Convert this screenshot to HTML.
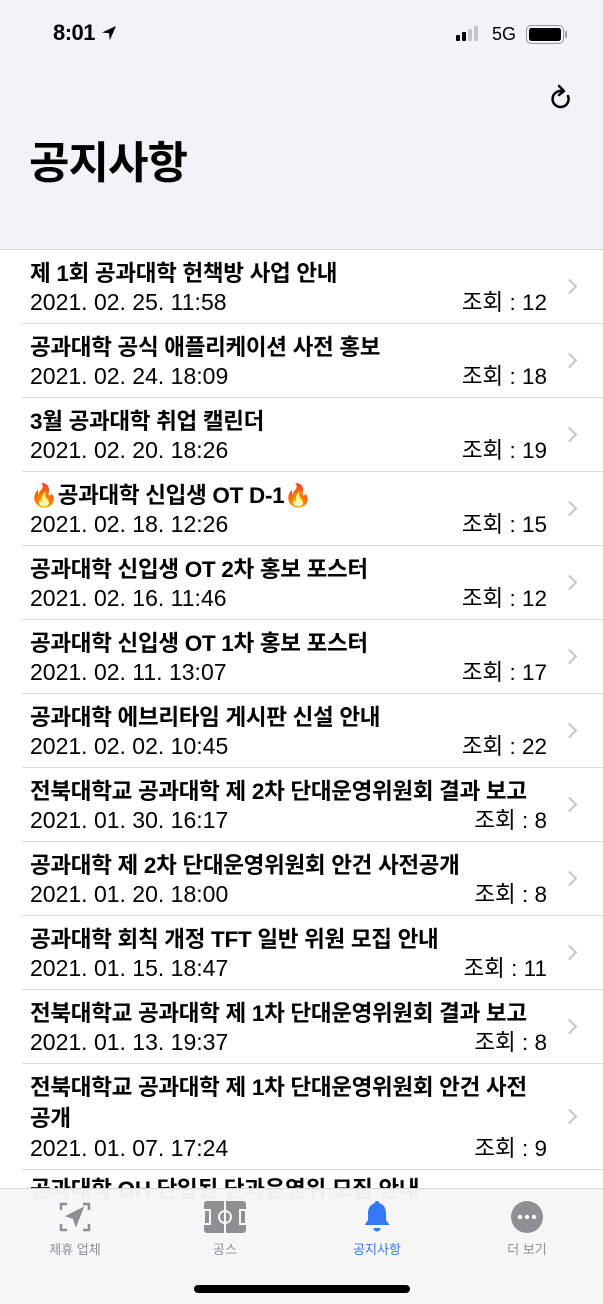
<!DOCTYPE html>
<html><head><meta charset="utf-8"><style>
*{margin:0;padding:0;box-sizing:border-box}
body{width:603px;height:1304px;overflow:hidden;background:#fff;font-family:"Liberation Sans","Noto Sans CJK KR",sans-serif;position:relative;color:#000}
.hdr{position:absolute;left:0;top:0;width:603px;height:250px;background:#f2f2f7;border-bottom:1px solid #d8d8dc}
.time{position:absolute;left:53px;top:20px;font-size:22px;font-weight:bold;letter-spacing:-0.5px}
.h1{position:absolute;left:29px;top:134px;font-size:44px;line-height:60px;font-weight:bold;letter-spacing:-1px}
.row{position:absolute;left:0;width:603px}
.row .sep{position:absolute;left:22px;right:0;bottom:0;height:1px;background:#dcdcdf}
.t{position:absolute;left:30px;top:8px;font-size:22.5px;font-weight:bold;letter-spacing:-0.3px;line-height:31px;width:522px}
.d{position:absolute;left:30px;font-size:23px;line-height:30px}
.v{position:absolute;right:56px;font-size:22.5px;line-height:30px}
.chev{position:absolute;right:28px;width:11px;height:11px;border-right:2.5px solid #c4c4c7;border-top:2.5px solid #c4c4c7;transform:rotate(45deg)}
.tab{position:absolute;left:0;top:1188px;width:603px;height:116px;background:rgba(246,246,247,0.97);border-top:1px solid #d5d5d8}
.tl{position:absolute;top:50px;font-size:13px;color:#8e8e93;transform:translateX(-50%)}
</style></head><body>
<div class="hdr">
<div class="time">8:01 <svg width="16" height="16" viewBox="0 0 16 16" style="vertical-align:-1px"><path d="M15 1L1 7.5l7 .8.8 7z" fill="#000"/></svg></div>
<svg style="position:absolute;left:455px;top:26px" width="30" height="16"><rect x="1" y="9" width="4" height="6" rx="1"/><rect x="7" y="6" width="4" height="9" rx="1"/><rect x="13" y="3" width="4" height="12" rx="1" fill="#c5c5c8"/><rect x="19" y="0" width="4" height="15" rx="1" fill="#c5c5c8"/></svg>
<div style="position:absolute;left:492px;top:24px;font-size:18px">5G</div>
<div style="position:absolute;left:526px;top:25px;width:38px;height:19px;border:1.5px solid #999;border-radius:5px;padding:2px"><div style="width:100%;height:100%;background:#000;border-radius:2.5px"></div></div>
<div style="position:absolute;left:565px;top:31px;width:2px;height:7px;background:#999;border-radius:1px"></div>
<svg style="position:absolute;left:549px;top:84px" width="26" height="28" viewBox="0 0 26 28"><path d="M19 12A8 8 0 1 1 12 7" fill="none" stroke="#000" stroke-width="2.5" stroke-linecap="round"/><path d="M10 2l5 5-5 4" fill="none" stroke="#000" stroke-width="2.5" stroke-linecap="round" stroke-linejoin="round"/></svg>
<div class="h1">공지사항</div>
</div>
<div id="list"></div>
<div class="row" style="top:1170px;height:30px"><div class="t" style="top:4px">공과대학 OH 단일된 단과운영위 모집 안내</div></div>
<div class="tab">
<svg style="position:absolute;left:59px;top:12px" width="32" height="32" viewBox="0 0 32 32" fill="none" stroke="#8e8e93" stroke-width="2.5"><path d="M2 9V3h6M24 3h6v6M30 23v6h-6M8 29H2v-6"/><path d="M23 8L9 15l6 2 2 6z" fill="#8e8e93"/></svg>
<svg style="position:absolute;left:204px;top:12px" width="42" height="32" viewBox="0 0 42 32"><rect width="42" height="32" rx="3" fill="#8e8e93"/><g fill="none" stroke="#f6f6f7" stroke-width="2"><line x1="21" y1="0" x2="21" y2="32"/><circle cx="21" cy="16" r="6"/><rect x="0" y="9" width="6" height="14"/><rect x="36" y="9" width="6" height="14"/></g></svg>
<svg style="position:absolute;left:362px;top:10px" width="30" height="36" viewBox="0 0 30 36"><path d="M15 2c-1.5 0-2.3 1-2.3 2.2C8 5.5 6 9.5 6 14v7l-3.5 5h25L24 21v-7c0-4.5-2-8.5-6.7-9.8C17.3 3 16.5 2 15 2z" fill="#3478f6"/><path d="M11.5 29h7a3.5 3.5 0 0 1-7 0z" fill="#3478f6"/></svg>
<svg style="position:absolute;left:511px;top:12px" width="32" height="32"><circle cx="16" cy="16" r="16" fill="#8e8e93"/><circle cx="9" cy="16" r="2.2" fill="#fff"/><circle cx="16" cy="16" r="2.2" fill="#fff"/><circle cx="23" cy="16" r="2.2" fill="#fff"/></svg>
<div class="tl" style="left:75px">제휴 업체</div>
<div class="tl" style="left:225px">공스</div>
<div class="tl" style="left:377px;color:#3478f6">공지사항</div>
<div class="tl" style="left:527px">더 보기</div>
<div style="position:absolute;left:194px;top:96px;width:216px;height:8px;border-radius:4px;background:#000"></div>
</div>
<script>
var d=[["제 1회 공과대학 헌책방 사업 안내","2021. 02. 25. 11:58","12"],["공과대학 공식 애플리케이션 사전 홍보","2021. 02. 24. 18:09","18"],["3월 공과대학 취업 캘린더","2021. 02. 20. 18:26","19"],["🔥공과대학 신입생 OT D-1🔥","2021. 02. 18. 12:26","15"],["공과대학 신입생 OT 2차 홍보 포스터","2021. 02. 16. 11:46","12"],["공과대학 신입생 OT 1차 홍보 포스터","2021. 02. 11. 13:07","17"],["공과대학 에브리타임 게시판 신설 안내","2021. 02. 02. 10:45","22"],["전북대학교 공과대학 제 2차 단대운영위원회 결과 보고","2021. 01. 30. 16:17","8"],["공과대학 제 2차 단대운영위원회 안건 사전공개","2021. 01. 20. 18:00","8"],["공과대학 회칙 개정 TFT 일반 위원 모집 안내","2021. 01. 15. 18:47","11"],["전북대학교 공과대학 제 1차 단대운영위원회 결과 보고","2021. 01. 13. 19:37","8"],["전북대학교 공과대학 제 1차 단대운영위원회 안건 사전<br>공개","2021. 01. 07. 17:24","9"]];
var h="",y=250;
d.forEach(function(r,i){var H=i==11?106:74;var dt=H-37;
h+='<div class="row" style="top:'+y+'px;height:'+H+'px"><div class="t">'+r[0]+'</div><div class="d" style="top:'+dt+'px">'+r[1]+'</div><div class="v" style="top:'+(dt+1)+'px">조회 : '+r[2]+'</div><div class="chev" style="top:'+(H/2-6)+'px"></div><div class="sep"></div></div>';y+=H;});
document.getElementById("list").innerHTML=h;
</script>
</body></html>
